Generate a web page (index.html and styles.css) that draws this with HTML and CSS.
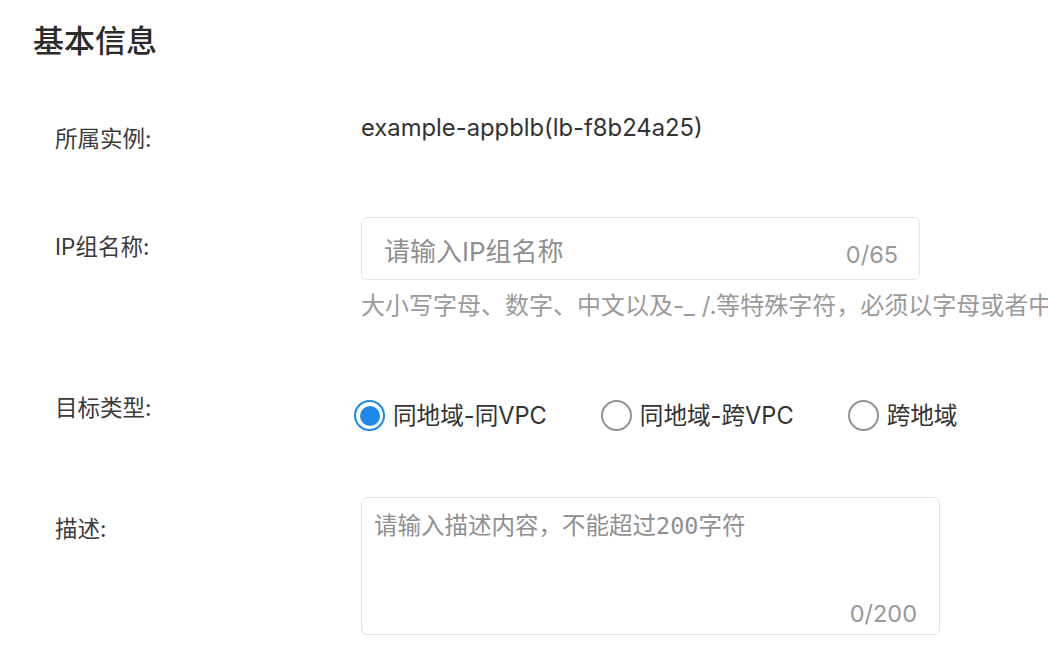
FILE: index.html
```html
<!DOCTYPE html>
<html lang="zh-CN">
<head>
  <meta charset="UTF-8">
  <meta name="viewport" content="width=device-width, initial-scale=1.0">
  <title>基本信息</title>
  <link rel="stylesheet" href="styles.css">
</head>
<body>
  <div class="page">
    <h2 class="section-title">基本信息</h2>

    <div class="form">
      <div class="form-row row-instance">
        <div class="form-label label-instance">所属实例:</div>
        <div class="form-value">example-appblb(lb-f8b24a25)</div>
      </div>

      <div class="form-row row-name">
        <div class="form-label label-name">IP组名称:</div>
        <div class="form-field">
          <div class="input-box">
            <input type="text" class="text-input" placeholder="请输入IP组名称">
            <span class="counter">0/65</span>
          </div>
          <p class="hint">大小写字母、数字、中文以及-_ /.等特殊字符，必须以字母或者中</p>
        </div>
      </div>

      <div class="form-row row-type">
        <div class="form-label">目标类型:</div>
        <div class="radio-group">
          <label class="radio-option">
            <span class="radio-circle checked"></span>
            <span class="radio-text">同地域-同VPC</span>
          </label>
          <label class="radio-option">
            <span class="radio-circle"></span>
            <span class="radio-text">同地域-跨VPC</span>
          </label>
          <label class="radio-option">
            <span class="radio-circle"></span>
            <span class="radio-text">跨地域</span>
          </label>
        </div>
      </div>

      <div class="form-row row-desc">
        <div class="form-label label-desc">描述:</div>
        <div class="textarea-box">
          <textarea class="text-area" placeholder="请输入描述内容，不能超过200字符"></textarea>
          <span class="counter counter-area">0/200</span>
        </div>
      </div>
    </div>
  </div>
</body>
</html>
```

FILE: styles.css
```css
body {
  margin: 0;
  padding: 0;
  background-color: #fff;
  font-family: Inter, "Noto Sans CJK SC", sans-serif;
  color: #333;
  overflow: hidden;
}

.page {
  padding: 22px 0 0 33px;
}

.section-title {
  margin: 0;
  font-size: 31px;
  line-height: 38px;
  font-weight: 500;
  color: #2b2b2b;
}

.form {
  padding-left: 22px;
}

.form-row {
  display: flex;
  align-items: flex-start;
}

.form-label {
  flex: 0 0 306px;
  font-size: 22.5px;
  line-height: 30px;
  color: #3a3a3a;
}

.row-instance {
  margin-top: 53px;
}

.label-instance {
  padding-top: 11px;
}

.form-value {
  font-size: 23.8px;
  line-height: 30px;
  color: #333;
}

.row-name {
  margin-top: 63px;
}

.label-name {
  padding-top: 15px;
}

.form-field {
  display: flex;
  flex-direction: column;
}

.input-box {
  display: flex;
  align-items: center;
  width: 559px;
  height: 63px;
  box-sizing: border-box;
  border: 1px solid #e4e4e4;
  border-radius: 6px;
  padding: 0 21px 0 22px;
}

.text-input {
  flex: 1;
  min-width: 0;
  border: none;
  outline: none;
  padding: 6px 0 0 0;
  font-family: Inter, "Noto Sans CJK SC", sans-serif;
  font-size: 26px;
  color: #333;
  background: transparent;
}

.text-input::placeholder {
  color: #8f8f8f;
}

.counter {
  font-size: 23.5px;
  line-height: 30px;
  color: #999;
  padding-top: 13px;
}

.hint {
  margin: 11px 0 0 0;
  font-size: 24px;
  line-height: 30px;
  color: #9a9a9a;
  white-space: nowrap;
}

.row-type {
  margin-top: 72px;
}

.radio-group {
  display: flex;
  margin-left: -7px;
  padding-top: 7px;
}

.radio-option {
  display: flex;
  align-items: center;
  margin-right: 54px;
  cursor: pointer;
}

.radio-circle {
  display: flex;
  align-items: center;
  justify-content: center;
  width: 31px;
  height: 31px;
  box-sizing: border-box;
  border: 2px solid #929292;
  border-radius: 50%;
  margin-right: 8px;
}

.radio-circle.checked {
  border-color: #1e88ea;
}

.radio-circle.checked::after {
  content: "";
  width: 20px;
  height: 20px;
  border-radius: 50%;
  background-color: #1e88ea;
}

.radio-text {
  font-size: 23.6px;
  line-height: 31px;
  color: #333;
}

.row-desc {
  margin-top: 66px;
}

.label-desc {
  padding-top: 17px;
}

.textarea-box {
  display: flex;
  flex-direction: column;
  width: 579px;
  height: 138px;
  box-sizing: border-box;
  border: 1px solid #e4e4e4;
  border-radius: 6px;
  padding: 13px 22px 5px 12px;
}

.text-area {
  flex: 1;
  border: none;
  outline: none;
  resize: none;
  padding: 0;
  font-family: "DejaVu Sans Mono", "Noto Sans CJK SC", monospace;
  font-size: 23.5px;
  line-height: 30px;
  color: #333;
}

.text-area::placeholder {
  color: #8f8f8f;
}

.counter-area {
  align-self: flex-end;
  padding-top: 0;
}
```
